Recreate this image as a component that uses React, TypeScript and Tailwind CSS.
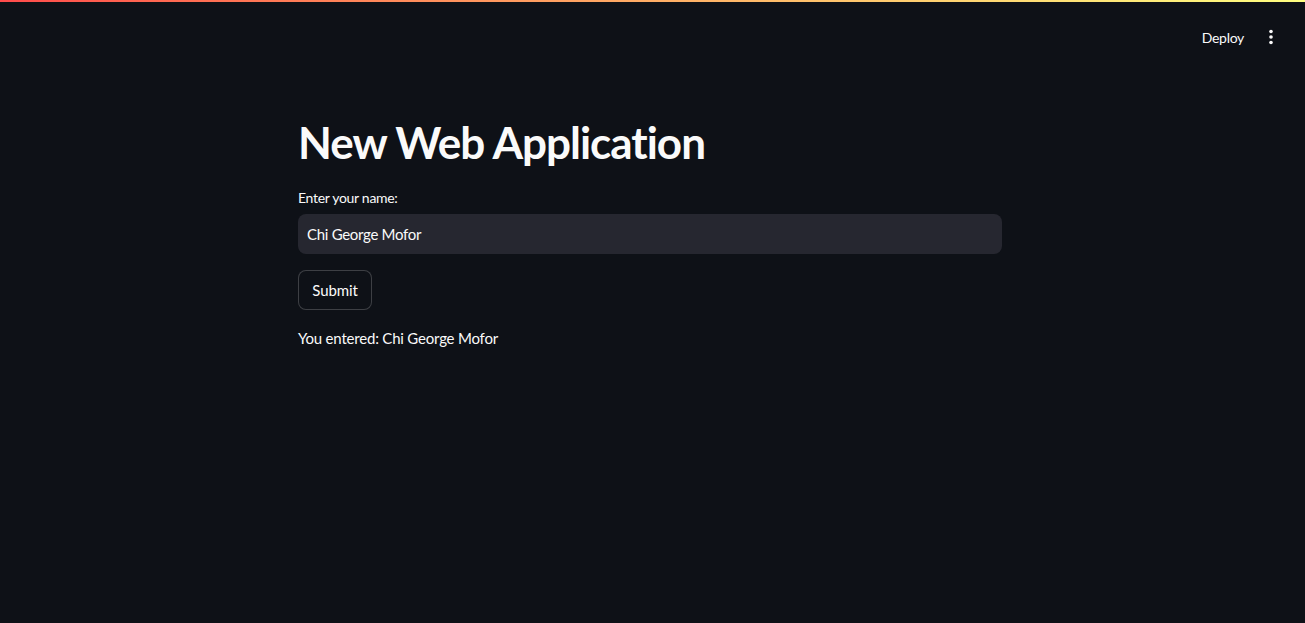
import React from "react";

export default function App() {
  const font = { fontFamily: "Lato, 'Noto Sans', sans-serif" };
  return (
    <div className="min-h-[623px] w-full bg-[#0e1117] text-[#fafafa]" style={font}>
      <div className="h-[2px] w-full bg-gradient-to-r from-[#ff4b4b] to-[#ffff80]" />
      <header className="flex h-[70px] items-center justify-end pr-[22px]">
        <button className="mr-[25px] text-[14px] tracking-[-0.3px] text-[#fafafa]">Deploy</button>
        <svg width="4" height="16" viewBox="0 0 4 16" className="mr-[10px]">
          <circle cx="2" cy="2.5" r="1.8" fill="#fafafa" />
          <circle cx="2" cy="8" r="1.8" fill="#fafafa" />
          <circle cx="2" cy="13.5" r="1.8" fill="#fafafa" />
        </svg>
      </header>
      <main className="ml-[298px] flex w-[704px] flex-col pt-[44px]">
        <h1 className="text-[44px] font-bold leading-[1.2] tracking-[-1px]">New Web Application</h1>
        <label className="mt-[19px] text-[14px] leading-[20px] tracking-[-0.3px]">Enter your name:</label>
        <div className="mt-[6px] flex h-[40px] items-center rounded-[8px] bg-[#262730] px-[9px] text-[15px] tracking-[-0.3px]">
          Chi George Mofor
        </div>
        <div className="mt-[16px]">
          <button className="h-[40px] w-[74px] rounded-[8px] border border-[rgba(250,250,250,0.2)] bg-[#0e1117] text-[15px] tracking-[-0.1px]">
            Submit
          </button>
        </div>
        <p className="mt-[16px] text-[15px] leading-[24px] tracking-[-0.2px]">You entered: Chi George Mofor</p>
      </main>
    </div>
  );
}
